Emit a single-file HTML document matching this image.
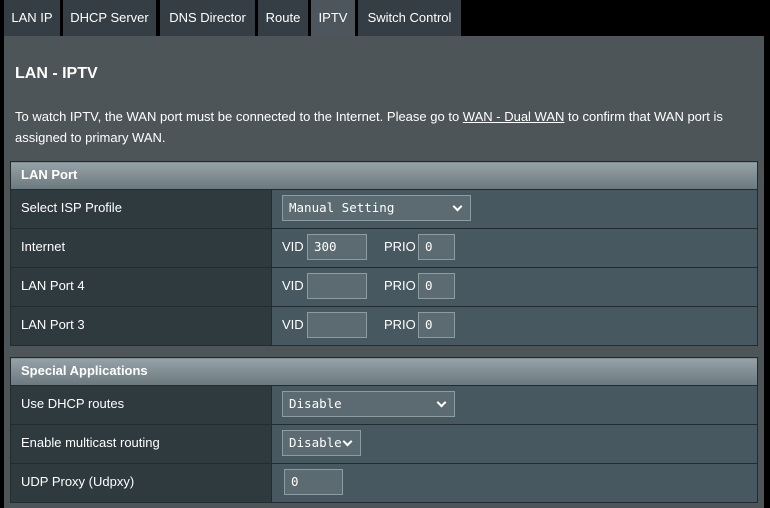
<!DOCTYPE html>
<html><head><style>
*{margin:0;padding:0;box-sizing:border-box}
body{width:770px;height:508px;background:#000;font-family:"Liberation Sans",sans-serif;overflow:hidden;position:relative}
.tab{position:absolute;top:0;height:36px;background:#353e44;color:#fff;font-size:13px;line-height:35px;text-align:center}
.tab.on{background:#4d565c}
#main{position:absolute;left:4px;top:36px;width:760px;height:472px;background:#4d5559}
h1{position:absolute;left:11px;top:29px;font-size:16px;color:#fff;font-weight:bold}
p.d{position:absolute;left:11px;top:70px;width:740px;font-size:13px;line-height:21px;color:#fff}
p.d u{color:#fff}
table{position:absolute;left:6px;width:748px;border-collapse:collapse;font-size:13px;color:#fff}
th{height:28px;text-align:left;padding-left:10px;padding-bottom:2px;background:linear-gradient(#95a2a8,#6b787e);border:1px solid #222c30;font-size:13px}
td{height:39px;border:1px solid #222c30;background:#475860;padding-left:10px;padding-bottom:3px}
td.l{width:261px;background:#2f3a3f}
.f{display:flex;align-items:center;height:26px}
.in{display:inline-block;height:26px;background:#5b6b71;border:1px solid #8d9ca0;font-family:"DejaVu Sans Mono","Liberation Mono",monospace;font-size:12.5px;line-height:24px;padding-left:6px;position:relative}
.sel:after{content:"";position:absolute;right:9px;top:7px;width:5px;height:5px;border-right:2px solid #fff;border-bottom:2px solid #fff;transform:rotate(45deg)}
.v{width:25px}.p{width:34px;margin-left:17px}
</style></head><body>
<div class="tab" style="left:4px;width:56px">LAN IP</div>
<div class="tab" style="left:63px;width:93px">DHCP Server</div>
<div class="tab" style="left:160px;width:95px">DNS Director</div>
<div class="tab" style="left:258px;width:50px">Route</div>
<div class="tab on" style="left:311px;width:44px">IPTV</div>
<div class="tab" style="left:358px;width:103px">Switch Control</div>
<div id="main">
<h1>LAN - IPTV</h1>
<p class="d">To watch IPTV, the WAN port must be connected to the Internet. Please go to <u>WAN - Dual WAN</u> to confirm that WAN port is assigned to primary WAN.</p>
<table style="top:125px">
<tr><th colspan="2">LAN Port</th></tr>
<tr><td class="l">Select ISP Profile</td><td><div class="f"><span class="in sel" style="width:189px">Manual Setting</span></div></td></tr>
<tr><td class="l">Internet</td><td><div class="f"><span class="v">VID</span><span class="in" style="width:60px">300</span><span class="p">PRIO</span><span class="in" style="width:37px">0</span></div></td></tr>
<tr><td class="l">LAN Port 4</td><td><div class="f"><span class="v">VID</span><span class="in" style="width:60px"></span><span class="p">PRIO</span><span class="in" style="width:37px">0</span></div></td></tr>
<tr><td class="l">LAN Port 3</td><td><div class="f"><span class="v">VID</span><span class="in" style="width:60px"></span><span class="p">PRIO</span><span class="in" style="width:37px">0</span></div></td></tr>
</table>
<table style="top:321px">
<tr><th colspan="2">Special Applications</th></tr>
<tr><td class="l">Use DHCP routes</td><td><div class="f"><span class="in sel" style="width:173px">Disable</span></div></td></tr>
<tr><td class="l">Enable multicast routing</td><td><div class="f"><span class="in sel" style="width:79px">Disable</span></div></td></tr>
<tr><td class="l">UDP Proxy (Udpxy)</td><td><div class="f"><span class="in" style="width:59px;margin-left:2px">0</span></div></td></tr>
</table>
</div>
</body></html>
